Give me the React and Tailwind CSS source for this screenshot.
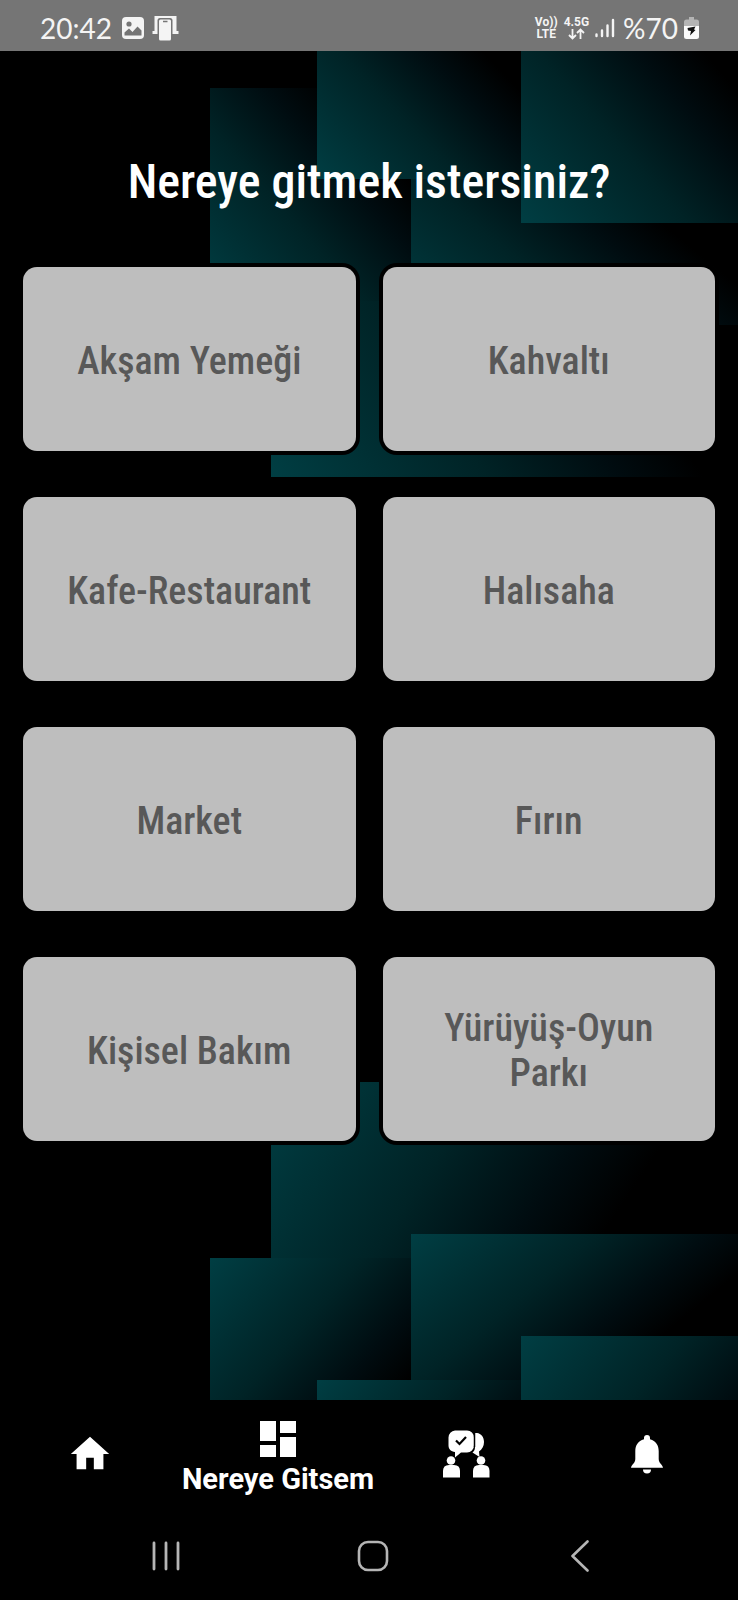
import { MdHome, MdDashboard } from "react-icons/md";

const CATEGORIES = [
  "Akşam Yemeği",
  "Kahvaltı",
  "Kafe-Restaurant",
  "Halısaha",
  "Market",
  "Fırın",
  "Kişisel Bakım",
  "Yürüyüş-Oyun Parkı",
];

// Each panel starts at a bright corner (x, y) and fades along (dx, dy).
const PANELS = [
  { id: "e", x: 271, y: 1082, h: 318, dx: 300, dy: 200 },
  { id: "a", x: 210, y: 1258, h: 213, dx: 172, dy: 152 },
  { id: "c", x: 411, y: 1234, h: 325, dx: 150, dy: 184 },
  { id: "b", x: 317, y: 1380, h: 178, dx: 150, dy: 144 },
  { id: "d", x: 521, y: 1336, h: 223, dx: 188, dy: 165 },
];

function Panels() {
  return PANELS.map((p) => (
    <rect key={p.id} x={p.x} y={p.y} width={738 - p.x} height={p.h} fill={`url(#fade-${p.id})`} />
  ));
}

function Backdrop() {
  return (
    <svg
      className="absolute inset-0 h-full w-full"
      viewBox="0 51 738 1349"
      preserveAspectRatio="none"
      aria-hidden="true"
    >
      <defs>
        {PANELS.map((p) => (
          <linearGradient
            key={p.id}
            id={`fade-${p.id}`}
            gradientUnits="userSpaceOnUse"
            x1={p.x}
            y1={p.y}
            x2={p.x + p.dx}
            y2={p.y + p.dy}
          >
            <stop offset="0" stopColor="#003e43" />
            <stop offset="0.5" stopColor="#002326" />
            <stop offset="0.8" stopColor="#000c10" />
            <stop offset="1" stopColor="#000000" />
          </linearGradient>
        ))}
      </defs>
      <rect x="0" y="51" width="738" height="1349" fill="#000" />
      <g>
        <Panels />
      </g>
      <g transform="translate(0 1559) scale(1 -1)">
        <Panels />
      </g>
    </svg>
  );
}

function StatusBar() {
  return (
    <header className="flex h-[51px] items-center bg-[#757575] pt-[5px] pr-[39px] pl-10 font-[Lato,sans-serif] text-[28px] leading-8 text-[#f4f4f4]">
      <time>20:42</time>
      <svg className="ml-[10px] h-[22px] w-[22px]" viewBox="0 0 22 22" aria-hidden="true">
        <rect width="22" height="22" rx="4" fill="currentColor" />
        <circle cx="7" cy="7" r="2.6" fill="#757575" />
        <path d="M2.5 18.5v-3l4.5-4 3.5 3.5 5-5.5 4 4v5z" fill="#757575" />
      </svg>
      <svg className="ml-2 h-[26px] w-[27px]" viewBox="0 0 27 26" aria-hidden="true">
        <path d="M2.5 1h22v15h2v3H0.500v-3h2z" fill="currentColor" />
        <rect x="5.500" y="3" width="15" height="23" rx="2.500" fill="#757575" />
        <rect x="7" y="4.500" width="12" height="21" rx="1.500" fill="currentColor" />
        <path d="M11 6.500h4.500" stroke="#757575" strokeWidth="1.500" />
      </svg>
      <div className="ml-auto flex items-center">
        <div className="text-center font-[Roboto,sans-serif] text-[12px] leading-3 font-bold">
          <div>Vo))</div>
          <div>LTE</div>
        </div>
        <div className="ml-[6px] flex flex-col items-center font-[Roboto,sans-serif] text-[12px] leading-3 font-bold">
          <span>4.5G</span>
          <svg className="h-3 w-[17px]" viewBox="0 0 17 12" fill="none" stroke="currentColor" strokeWidth="1.800" aria-hidden="true">
            <path d="M4.500 1v9.500M1 7l3.500 3.500L8 7M12.500 11V1.500M9 5l3.500-3.500L16 5" />
          </svg>
        </div>
        <svg className="ml-[6px] h-5 w-5" viewBox="0 0 20 20" stroke="currentColor" strokeWidth="2.400" strokeLinecap="round" aria-hidden="true">
          <path d="M1.500 16.500v1.500M7 12.500V18M12.500 7.500V18M18 2v16" />
        </svg>
        <span className="ml-2">%70</span>
        <svg className="ml-[6px] h-[22px] w-[15px]" viewBox="0 0 15 22" aria-hidden="true">
          <path d="M5 0h5v2.500h2.500A2.500 2.500 0 0 1 15 5v5H0V5a2.500 2.500 0 0 1 2.500-2.500H5z" fill="#b4b4b4" />
          <path d="M0 9h15v10.500a2.500 2.500 0 0 1-2.500 2.500h-10A2.500 2.500 0 0 1 0 19.500z" fill="#fafafa" />
          <path d="M3.500 11l8-1.500-1.500 3 1.500.5-5.500 5.500 1-4.500-3-.5z" fill="#111" />
        </svg>
      </div>
    </header>
  );
}

function ChatPeopleIcon() {
  return (
    <svg className="h-12 w-[47px]" viewBox="0 0 47 48" aria-hidden="true">
      <g fill="#fff">
        <path d="M32 3h2c4 0.500 7 4 7 9 0 4-2 7.500-5 9.500l.5 5.500-7-4.500c2-1.500 2.500-3 2.500-6z" />
        <path d="M12 0.500h12a7 7 0 0 1 7 7v8a7 7 0 0 1-7 7h-6l-6 5v-5.500c-4-.5-6.500-3-6.500-6.500v-8a7 7 0 0 1 6.500-7z" />
        <circle cx="8" cy="30.500" r="4.300" />
        <path d="M0 47.500v-6.500q0-6 6-6h5q6 0 6 6v6.500z" />
        <circle cx="38" cy="30.500" r="4.300" />
        <path d="M30 47.500v-6.500q0-6 6-6h4.500q6 0 6 6v6.500z" />
      </g>
      <path d="M31.500 3v14" stroke="#000" strokeWidth="1.500" />
      <path d="M13 10.500l3.500 3.500 6.500-7" fill="none" stroke="#000" strokeWidth="2.200" />
    </svg>
  );
}

function BellIcon() {
  return (
    <svg className="h-[39px] w-8" viewBox="0 0 32 39" fill="currentColor" aria-hidden="true">
      <path d="M16 0a3 3 0 0 1 3 3v1.200C25 5.700 27.700 10.500 27.700 16v8c0 4.500 4 5.500 4.300 8.800H0C.3 29.500 4.300 28.500 4.300 24v-8c0-5.500 2.700-10.300 8.700-11.800V3a3 3 0 0 1 3-3z" />
      <path d="M12 34.500h8a4 4 0 0 1-8 0z" />
    </svg>
  );
}

export default function App() {
  return (
    <div className="flex min-h-screen flex-col bg-black">
      <StatusBar />
      <main className="relative flex-1">
        <Backdrop />
        <div className="relative px-[23px] pt-[101px]">
          <h1 className="text-center font-['Roboto_Condensed','Liberation_Sans_Narrow',Roboto,sans-serif] text-[48px] leading-[60px] font-medium text-white">
            Nereye gitmek istersiniz?
          </h1>
          <div className="mt-[55px] grid grid-cols-2 gap-x-[27px] gap-y-[46px]">
            {CATEGORIES.map((name) => (
              <button
                key={name}
                type="button"
                className="flex h-[184px] items-center justify-center rounded-[14px] bg-[#bebebe] px-10 pt-1 text-center font-['Roboto_Condensed','Liberation_Sans_Narrow',Roboto,sans-serif] text-[38px] leading-[45px] font-medium text-[#585858] shadow-[0_0_0_4px_#000]"
              >
                {name}
              </button>
            ))}
          </div>
        </div>
      </main>
      <nav className="grid h-[108px] grid-cols-[180fr_196fr_180fr_182fr] text-white">
        <a href="#home" aria-label="Home" className="flex items-center justify-center">
          <MdHome size={46} />
        </a>
        <a href="#places" className="flex flex-col items-center justify-center pt-[2px] font-[Roboto,sans-serif] text-[29px] leading-8 font-bold whitespace-nowrap">
          <MdDashboard size={48} />
          Nereye Gitsem
        </a>
        <a href="#chat" aria-label="Chat" className="flex items-center justify-center">
          <ChatPeopleIcon />
        </a>
        <a href="#alerts" aria-label="Notifications" className="flex items-center justify-center">
          <BellIcon />
        </a>
      </nav>
      <div className="flex h-[92px] items-center justify-between pt-1 pr-[134px] pl-[142px] text-[#b5b5b5]">
        <button type="button" aria-label="Recent apps" className="flex h-12 w-12 items-center justify-center">
          <svg className="h-8 w-8" viewBox="0 0 32 32" stroke="currentColor" strokeWidth="2.800" strokeLinecap="round" aria-hidden="true">
            <path d="M4 3v26M16 3v26M28 3v26" />
          </svg>
        </button>
        <button type="button" aria-label="Home screen" className="flex h-12 w-12 items-center justify-center">
          <svg className="h-8 w-8" viewBox="0 0 32 32" fill="none" stroke="currentColor" strokeWidth="2.600" aria-hidden="true">
            <rect x="2" y="2" width="28" height="28" rx="9" />
          </svg>
        </button>
        <button type="button" aria-label="Back" className="flex h-12 w-12 items-center justify-center">
          <svg className="h-8 w-8" viewBox="0 0 32 32" fill="none" stroke="currentColor" strokeWidth="2.600" strokeLinecap="round" strokeLinejoin="round" aria-hidden="true">
            <path d="M23.500 1.500L8.500 16l15 14.500" />
          </svg>
        </button>
      </div>
    </div>
  );
}
